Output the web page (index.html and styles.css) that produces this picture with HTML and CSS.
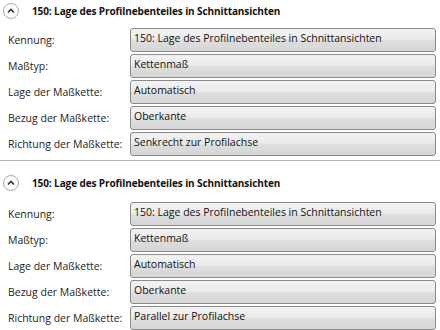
FILE: index.html
```
<!DOCTYPE html>
<html>
	<head>
		<meta charset="UTF-8">
		<title>Eigenschaften</title>
		<link rel="stylesheet" href="styles.css">
	</head>
	<body>
		<div class="group first">
			<div class="head">
				<span class="toggle">
					<svg width="16" height="16" viewBox="0 0 16 16"><circle cx="8" cy="8" r="7.5" fill="#fff" stroke="#a8a8a8"/><path d="M5 9.5 L8 6.5 L11 9.5" fill="none" stroke="#333" stroke-width="1.6"/></svg>
				</span>
				<span class="title">150: Lage des Profilnebenteiles in Schnittansichten</span>
			</div>
			<div class="rows">
				<div class="row"><span class="label">Kennung:</span><div class="field">150: Lage des Profilnebenteiles in Schnittansichten</div></div>
				<div class="row"><span class="label">Maßtyp:</span><div class="field">Kettenmaß</div></div>
				<div class="row"><span class="label">Lage der Maßkette:</span><div class="field">Automatisch</div></div>
				<div class="row"><span class="label">Bezug der Maßkette:</span><div class="field">Oberkante</div></div>
				<div class="row"><span class="label">Richtung der Maßkette:</span><div class="field">Senkrecht zur Profilachse</div></div>
			</div>
		</div>
		<div class="group">
			<div class="head">
				<span class="toggle">
					<svg width="16" height="16" viewBox="0 0 16 16"><circle cx="8" cy="8" r="7.5" fill="#fff" stroke="#a8a8a8"/><path d="M5 9.5 L8 6.5 L11 9.5" fill="none" stroke="#333" stroke-width="1.6"/></svg>
				</span>
				<span class="title">150: Lage des Profilnebenteiles in Schnittansichten</span>
			</div>
			<div class="rows">
				<div class="row"><span class="label">Kennung:</span><div class="field">150: Lage des Profilnebenteiles in Schnittansichten</div></div>
				<div class="row"><span class="label">Maßtyp:</span><div class="field">Kettenmaß</div></div>
				<div class="row"><span class="label">Lage der Maßkette:</span><div class="field">Automatisch</div></div>
				<div class="row"><span class="label">Bezug der Maßkette:</span><div class="field">Oberkante</div></div>
				<div class="row"><span class="label">Richtung der Maßkette:</span><div class="field">Parallel zur Profilachse</div></div>
			</div>
		</div>
	</body>
</html>
```
FILE: styles.css
```
*{
	padding: 0;
	margin: 0;
	box-sizing: border-box;
}
body{
	width: 440px;
	height: 330px;
	overflow: hidden;
	background: #fff;
	font-family: "Open Sans", sans-serif;
	font-size: 10.5px;
	color: #1a1a1a;
}
.group{
	padding-top: 11px;
	border-bottom: 1px solid #b4b4b4;
	padding-bottom: 4px;
}
.group.first{
	padding-top: 0;
}
.head{
	height: 22px;
	display: flex;
	align-items: center;
	padding-left: 3px;
}
.toggle{
	display: flex;
	width: 16px;
	height: 16px;
}
.title{
	margin-left: 13px;
	font-weight: bold;
	font-size: 10px;
	letter-spacing: -0.1px;
	color: #111;
}
.rows{
	margin-top: 6px;
	display: flex;
	flex-direction: column;
	gap: 2px;
	padding-right: 4px;
}
.group + .group .rows{
	margin-top: 8px;
}
.row{
	display: flex;
	align-items: center;
	height: 24px;
}
.label{
	width: 130px;
	padding-left: 8px;
	color: #222;
}
.field{
	flex: 1;
	height: 24px;
	border: 1px solid #8a8a8a;
	border-radius: 3px;
	background: linear-gradient(#f3f3f3 0%, #ebebeb 45%, #dddddd 55%, #d6d6d6 100%);
	padding: 1px 0 0 3px;
	line-height: 17px;
	color: #111;
}
```
